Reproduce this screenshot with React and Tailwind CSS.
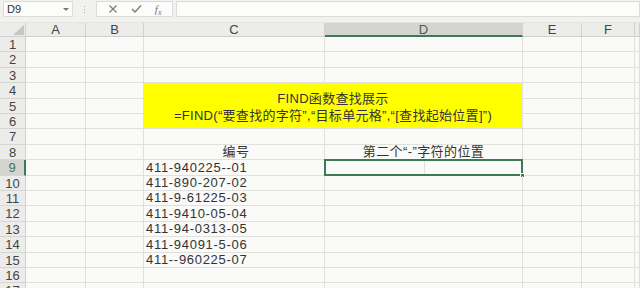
import React from 'react';

const cols = ['A', 'B', 'C', 'D', 'E', 'F', ''];
const ids = [
    '411-940225--01',
    '411-890-207-02',
    '411-9-61225-03',
    '411-9410-05-04',
    '411-94-0313-05',
    '411-94091-5-06',
    '411--960225-07',
];

const font = { fontFamily: '"Liberation Sans", "Noto Sans CJK SC", sans-serif' };

function Cell({ children, className = '' }) {
    return (
        <div className={`border-r border-b border-[#e0e0dd] overflow-visible whitespace-nowrap ${className}`}>
            {children}
        </div>
    );
}

export default function App() {
    const rows = [];
    for (let r = 1; r <= 17; r++) {
        const selected = r === 9;
        rows.push(
            <div
                key={`h${r}`}
                className={`flex items-center justify-center border-b border-[#d6d6d3] text-[13px] leading-none ${
                    selected
                        ? 'bg-[#d4d4d1] text-[#3f7a57] border-r-2 border-r-[#3f7a57]'
                        : 'bg-[#ececea] text-[#444] border-r border-r-[#d0d0cd]'
                }`}
            >
                {r}
            </div>
        );
        // A, B
        rows.push(<Cell key={`a${r}`} />);
        rows.push(<Cell key={`b${r}`} />);
        if (r === 4) {
            rows.push(
                <div
                    key="merged"
                    className="col-span-2 row-span-3 bg-[#ffff00] border-r border-b border-[#e0e0dd] flex flex-col items-center justify-center text-[13px] leading-[17px] tracking-[0.3px] text-[#333] pt-[2px]"
                >
                    <div>FIND函数查找展示</div>
                    <div>=FIND(“要查找的字符”,“目标单元格”,“[查找起始位置]”)</div>
                </div>
            );
        } else if (r === 5 || r === 6) {
            // covered by merged cell
        } else {
            let c = null;
            let d = null;
            if (r === 8) {
                c = <span className="text-[13px] tracking-[0.4px] text-[#333] pl-[4px]">编号</span>;
                d = <span className="text-[13px] tracking-[0.4px] text-[#333]">第二个“-”字符的位置</span>;
            }
            if (r >= 9 && r <= 15) {
                c = <span className="text-[13px] tracking-[0.7px] text-[#333] pl-[2px]">{ids[r - 9]}</span>;
            }
            rows.push(
                <Cell key={`c${r}`} className={`flex items-end leading-[15px] ${r === 8 ? 'justify-center' : ''}`}>
                    {c}
                </Cell>
            );
            rows.push(
                <Cell key={`d${r}`} className="relative flex items-end justify-center leading-[15px]">
                    {d}
                    {selected && (
                        <>
                            <div className="absolute top-0 bottom-0 left-[99px] w-px bg-[#e0e0dd]" />
                            <div className="absolute -left-[1px] -top-[1px] -right-[1px] -bottom-[1px] border-2 border-[#3f7a57]" />
                            <div className="absolute -right-[3px] -bottom-[3px] w-[5px] h-[5px] bg-[#3f7a57] border border-white" />
                        </>
                    )}
                </Cell>
            );
        }
        rows.push(<Cell key={`e${r}`} />);
        rows.push(<Cell key={`f${r}`} />);
        rows.push(<Cell key={`g${r}`} />);
    }

    return (
        <div className="w-[640px] h-[288px] overflow-hidden bg-[#fafaf8]" style={font}>
            {/* formula bar */}
            <div className="h-[23px] bg-[#f1f1ef] flex items-start pt-[1px] border-b border-[#e4e4e1]">
                <div className="ml-[3px] w-[70px] h-[16px] bg-[#fcfcfb] border border-[#dcdcd9] flex items-center justify-between px-[3px] text-[11px] text-[#333]">
                    <span>D9</span>
                    <span className="w-0 h-0 border-l-[3px] border-r-[3px] border-t-[3px] border-l-transparent border-r-transparent border-t-[#777]" />
                </div>
                <div className="w-[23px] h-[16px] flex flex-col items-center justify-center gap-[2px]">
                    <span className="w-[1px] h-[1px] bg-[#aaa]" />
                    <span className="w-[1px] h-[1px] bg-[#aaa]" />
                    <span className="w-[1px] h-[1px] bg-[#aaa]" />
                </div>
                <div className="w-[77px] h-[16px] bg-[#fcfcfb] border border-[#dcdcd9] flex items-center justify-around px-[4px] text-[#777]">
                    <svg width="10" height="10" viewBox="0 0 10 10" stroke="#777" strokeWidth="1.1" fill="none">
                        <path d="M1.5 1.5 L8.5 8.5 M8.5 1.5 L1.5 8.5" />
                    </svg>
                    <svg width="11" height="10" viewBox="0 0 11 10" stroke="#777" strokeWidth="1.3" fill="none">
                        <path d="M1 5 L4 8 L10 1.5" />
                    </svg>
                    <span className="italic text-[11px] leading-none" style={{ fontFamily: '"Liberation Serif", serif' }}>
                        f<sub className="text-[8px]">x</sub>
                    </span>
                </div>
                <div className="ml-[3px] flex-1 h-[16px] bg-[#fcfcfb] border border-[#dcdcd9]" />
            </div>

            {/* sheet */}
            <div className="grid grid-cols-[26px_60px_58px_181px_198px_59px_53px_1fr] grid-rows-[14px_15px_16px_15px_16px_15px_15px_16px_15px_16px_15px_15px_16px_15px_16px_15px_15px_16px]">
                <div className="bg-[#ececea] border-r border-b border-[#d0d0cd] relative">
                    <svg className="absolute right-[1px] bottom-[1px]" width="11" height="10" viewBox="0 0 11 10">
                        <path d="M11 0 L11 10 L0 10 Z" fill="#c6c6c3" />
                    </svg>
                </div>
                {cols.map((c) => (
                    <div
                        key={c || 'g'}
                        className={`flex items-center justify-center text-[13px] leading-none ${
                            c === 'D'
                                ? 'bg-[#d4d4d1] text-[#555] border-r border-r-[#d0d0cd] border-b-2 border-b-[#3f7a57]'
                                : 'bg-[#ececea] text-[#444] border-r border-b border-[#d0d0cd]'
                        }`}
                    >
                        {c}
                    </div>
                ))}
                {rows}
            </div>
        </div>
    );
}
